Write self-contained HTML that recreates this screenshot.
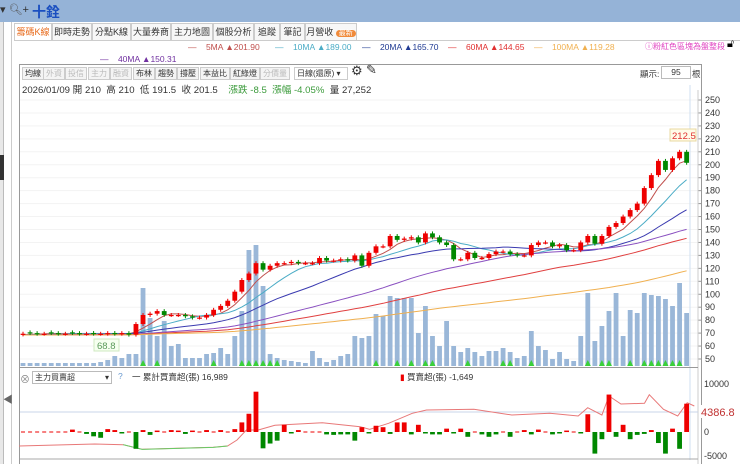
<!DOCTYPE html>
<html><head><meta charset="utf-8">
<style>
*{margin:0;padding:0;box-sizing:border-box}
body{width:740px;height:464px;overflow:hidden;background:#fff;font-family:"Liberation Sans","Noto Sans CJK TC",sans-serif;position:relative;font-size:11px;color:#333}
.abs{position:absolute;white-space:nowrap}
.tab{position:absolute;top:23px;height:18px;border:1px solid #ccc;border-bottom:none;background:#f7f7f7;font-size:9px;line-height:16px;text-align:center;overflow:hidden;color:#333}
.tb{position:absolute;top:67px;height:13px;border:1px solid #ccc;background:#f4f4f4;font-size:8px;line-height:11px;padding:0 2px;color:#333;overflow:hidden}
.tb.g{color:#bbb}
</style></head><body>
<div class="abs" style="left:0;top:0;width:740px;height:22px;background:#95b3d7"></div>
<div class="abs" style="left:0;top:3px;font-size:11px;color:#333">▾ <span style="color:#555">🔍︎</span>+</div>
<div class="abs" style="left:32px;top:2px;font-size:14px;color:#1a4fc0;font-weight:bold">十銓</div>
<div class="abs" style="left:0;top:22px;width:4px;height:442px;background:#e8e8e8;border-right:1px solid #bbb"></div>
<div class="abs" style="left:11px;top:22px;width:1px;height:442px;background:#ccc"></div>
<div class="abs" style="left:0;top:155px;width:4px;height:25px;background:#333"></div>
<div class="abs" style="left:3px;top:391px;font-size:10px;color:#666">◀</div>
<div class="tab" style="left:14px;width:38px;color:#e86a1a;background:#fff">籌碼K線</div>
<div class="tab" style="left:52px;width:40px">即時走勢</div>
<div class="tab" style="left:92px;width:39px">分點K線</div>
<div class="tab" style="left:131px;width:40px">大量券商</div>
<div class="tab" style="left:171px;width:42px">主力地圖</div>
<div class="tab" style="left:213px;width:41px">個股分析</div>
<div class="tab" style="left:254px;width:26px">追蹤</div>
<div class="tab" style="left:280px;width:25px">筆記</div>
<div class="tab" style="left:305px;width:52px">月營收 <span style="background:#f08a3a;color:#fff;border-radius:6px;font-size:7px;padding:0 3px">最新</span></div>
<div class="abs" style="left:14px;top:40px;width:726px;height:1px;background:#ccc"></div>
<div class="abs" style="top:42px;left:188px;font-size:8.5px;color:#c0504d">—&nbsp;&nbsp;&nbsp;&nbsp;5MA ▲201.90</div>
<div class="abs" style="top:42px;left:275px;font-size:8.5px;color:#4bacc6">—&nbsp;&nbsp;&nbsp;&nbsp;10MA ▲189.00</div>
<div class="abs" style="top:42px;left:362px;font-size:8.5px;color:#1f3a93">—&nbsp;&nbsp;&nbsp;&nbsp;20MA ▲165.70</div>
<div class="abs" style="top:42px;left:448px;font-size:8.5px;color:#e03030">—&nbsp;&nbsp;&nbsp;&nbsp;60MA ▲144.65</div>
<div class="abs" style="top:42px;left:534px;font-size:8.5px;color:#f0b050">—&nbsp;&nbsp;&nbsp;&nbsp;100MA ▲119.28</div>
<div class="abs" style="top:54px;left:100px;font-size:8.5px;color:#7030a0">—&nbsp;&nbsp;&nbsp;&nbsp;40MA ▲150.31</div>
<div class="abs" style="top:41px;left:645px;font-size:8px;color:#e040c0">ⓘ粉紅色區塊為盤整段</div>
<div class="abs" style="top:38px;left:727px;font-size:11px;color:#000">🔓︎</div>
<div class="abs" style="left:19px;top:64px;width:683px;height:400px;border:1px solid #999;border-bottom:none"></div>
<div class="tb" style="left:22px">均線</div><div class="tb g" style="left:43px">外資</div><div class="tb g" style="left:65px">投信</div><div class="tb g" style="left:88px">主力</div><div class="tb g" style="left:110px">融資</div><div class="tb" style="left:133px">布林</div><div class="tb" style="left:155px">趨勢</div><div class="tb" style="left:177px">撐壓</div><div class="tb" style="left:200px">本益比</div><div class="tb" style="left:230px">紅綠燈</div><div class="tb g" style="left:260px">分價量</div>
<div class="tb" style="left:294px;width:54px;background:#fff">日線(還原) ▾</div>
<div class="abs" style="left:351px;top:63px;font-size:13px">⚙︎</div>
<div class="abs" style="left:366px;top:62px;font-size:13px">✎</div>
<div class="abs" style="left:640px;top:68px;font-size:8.5px">顯示:</div>
<div class="abs" style="left:661px;top:66px;width:30px;height:13px;border:1px solid #bbb;font-size:8.5px;text-align:center;line-height:11px">95</div>
<div class="abs" style="left:692px;top:68px;font-size:8.5px">根</div>
<div class="abs" style="left:22px;top:82px;font-size:9.6px;color:#333">2026/01/09 開 210&nbsp; 高 210&nbsp; 低 191.5&nbsp; 收 201.5&nbsp;&nbsp;&nbsp; <span style="color:#3a9a3a">漲跌 -8.5&nbsp; 漲幅 -4.05%</span>&nbsp; 量 27,252</div>
<svg class="abs" style="left:0;top:0" width="740" height="464" id="s"></svg>
<div class="abs" style="left:20px;top:371px;font-size:10px;color:#888">⊗</div>
<div class="abs" style="left:32px;top:371px;width:80px;height:13px;border:1px solid #bbb;font-size:8px;line-height:11px;padding-left:2px">主力買賣超<span style="float:right;padding-right:2px">▾</span></div>
<div class="abs" style="left:118px;top:371px;font-size:8.5px;color:#6a9ad0">?</div>
<div class="abs" style="left:132px;top:371px;font-size:8.5px;color:#333">一 累計買賣超(張) 16,989</div>
<div class="abs" style="left:400px;top:371px;font-size:8.5px;color:#333"><span style="color:#e00">▮</span> 買賣超(張) -1,649</div>
<script>
var C=[69.5,70,69.5,69.5,70,69.5,69.5,70,69.5,69.5,69.5,69.5,70,69.5,70,68.8,77,84,85,87,84,84,84,83,82,82,84,88,91,95,102,111,116,124,119,122,124,124,125,124,124,124,128,126,126,127,126,130,122,132,137,137,145,142,143,144,140,147,144,140,138,127,127,132,128,128,131,133,133,131,130,130,138,140,140,137,138,134,134,140,145,139,145,152,155,160,165,170,182,192,203,196,205,210,201.5];
var V=[3,3,3,3,3,3,3,3,3,3,3,4,6,10,8,12,12,78,48,30,45,20,22,8,8,8,12,13,18,12,30,55,116,121,80,12,8,6,5,4,3,15,8,4,6,10,12,30,28,30,52,50,70,68,68,68,33,60,30,20,45,20,14,18,14,10,15,15,18,14,8,10,35,20,16,7,14,7,5,30,73,25,40,55,73,30,56,53,73,71,70,67,60,83,53];
var F=[0,0,0,0,0,0,0,500,0,-400,-900,-1200,600,400,-200,0,-3500,400,-600,300,0,400,300,-400,300,0,400,0,400,0,600,2000,3800,8400,-3400,-2400,-1800,1500,-200,400,0,0,0,-500,-600,-500,-500,-1800,1000,-300,1300,1000,-400,2000,2000,-500,1500,-300,-500,-500,700,-300,700,-1000,0,-500,-1000,-500,0,-1000,0,400,-500,500,0,-500,-200,300,0,-200,3700,-4500,-1500,7800,-1000,1500,-1500,-600,-400,400,-2300,-4500,700,-3500,5900,-1649];
var s='',X=function(i){return 23+i*7.06},Y=function(p){return 100+(250-p)*1.295};
for(var p=50;p<=250;p+=10){var y=Y(p);s+='<line x1="20" x2="698" y1="'+y+'" y2="'+y+'" stroke="#f3f3f3"/><text x="705" y="'+(y+3)+'" font-size="9" fill="#333" font-family="Liberation Sans">'+p+'</text><line x1="698" x2="702" y1="'+y+'" y2="'+y+'" stroke="#999"/>';}
s+='<line x1="690" x2="690" y1="85" y2="460" stroke="#cfdff0"/><line x1="698" x2="698" y1="90" y2="464" stroke="#ccc"/>';
for(var i=0;i<95;i++){var h=V[i];s+='<rect x="'+(X(i)-2.4)+'" y="'+(366-h)+'" width="4.8" height="'+h+'" fill="#9ab7d8"/>';}
[17,19,27,31,32,33,34,35,36,50,53,55,57,58,63,68,69,72,80,82,83,86,88,89,90,91,92,93].forEach(function(i){s+='<polygon points="'+(X(i)-3)+',366 '+(X(i)+3)+',366 '+X(i)+',360" fill="#3ad03a"/>'});
function ma(n){var d='';for(var i=0;i<95;i++){var t=0;for(var k=i-n+1;k<=i;k++)t+=k<0?68.5:C[k];d+=(i?'L':'M')+X(i).toFixed(1)+','+Y(t/n).toFixed(1);}return d}
[[5,'#c0504d'],[10,'#4bacc6'],[20,'#3a3ab0'],[40,'#8a50c0'],[60,'#e04040'],[100,'#f0b050']].forEach(function(m){s+='<path d="'+ma(m[0])+'" fill="none" stroke="'+m[1]+'" stroke-width="1"/>'});
for(var i=0;i<95;i++){var o=i?C[i-1]:69,c=C[i];if(i%3==1&&i<16)o=c+0.6;var up=c>=o,col=up?'#e00':'#080',t=Math.max(o,c)+1.5,b=Math.min(o,c)-1.5;s+='<line x1="'+X(i)+'" x2="'+X(i)+'" y1="'+Y(t)+'" y2="'+Y(b)+'" stroke="'+col+'"/>';var yy=Y(Math.max(o,c)),hh=Math.max(1.2,Math.abs(Y(o)-Y(c)));s+='<rect x="'+(X(i)-2.4)+'" y="'+yy+'" width="4.8" height="'+hh+'" fill="'+col+'"/>';}
s+='<rect x="670" y="129" width="26" height="12" fill="#fffbe8" stroke="#e8d8a0"/><text x="672" y="139" font-size="9.5" fill="#e03030" font-family="Liberation Sans">212.5</text>';
s+='<rect x="94" y="339" width="25" height="12" fill="#f6fff0" stroke="#cfe8c0"/><text x="97" y="349" font-size="9.5" fill="#5a9a5a" font-family="Liberation Sans">68.8</text>';
s+='<line x1="20" x2="698" y1="367.5" y2="367.5" stroke="#999"/>';
var Z=function(v){return 432-v*0.0048};
s+='<line x1="20" x2="698" y1="412" y2="412" stroke="#c8d4ea"/><line x1="20" x2="698" y1="459" y2="459" stroke="#aaa"/>';
[[10000,'10000'],[0,'0'],[-5000,'-5000']].forEach(function(a){s+='<text x="704" y="'+(Z(a[0])+3)+'" font-size="9" fill="#333" font-family="Liberation Sans">'+a[1]+'</text>'});
s+='<rect x="699" y="405" width="41" height="13" fill="#fff"/><text x="701" y="416" font-size="11" fill="#c03030" font-family="Liberation Sans">4386.8</text>';
var P=[[40,258],[200,252],[260,254],[300,268],[450,262],[480,258],[500,240],[520,210],[545,210],[580,196],[680,188],[760,200],[780,208],[820,190],[870,160],[900,150],[1000,148],[1080,165],[1160,160],[1220,168],[1240,143],[1270,165],[1285,108],[1310,132],[1360,130],[1370,104],[1400,148],[1430,168],[1450,128],[1465,138]];
var d='';P.forEach(function(q,k){d+=(k?'L':'M')+(q[0]/2.11).toFixed(1)+','+(360+q[1]/3).toFixed(1)});
s+='<path d="'+d+'" fill="none" stroke="#e87878" stroke-width="1"/>';
s+='<path d="M'+(260/2.11)+','+(360+254/3)+'L'+(300/2.11)+','+(360+268/3)+'L'+(450/2.11)+','+(360+262/3)+'L'+(480/2.11)+','+(360+258/3)+'" fill="none" stroke="#6c6" stroke-width="1"/>';
for(var i=0;i<95;i++){var v=F[i];if(!v){s+='<line x1="'+(X(i)-2)+'" x2="'+(X(i)+2)+'" y1="432" y2="432" stroke="#e00"/>';continue}var y1=Z(Math.max(v,0)),h=Math.max(1.5,Math.abs(v)*0.0048);s+='<rect x="'+(X(i)-2.4)+'" y="'+y1+'" width="4.8" height="'+h+'" fill="'+(v>0?'#e00':'#080')+'"/>';}
document.getElementById('s').innerHTML=s;
</script>
</body></html>
